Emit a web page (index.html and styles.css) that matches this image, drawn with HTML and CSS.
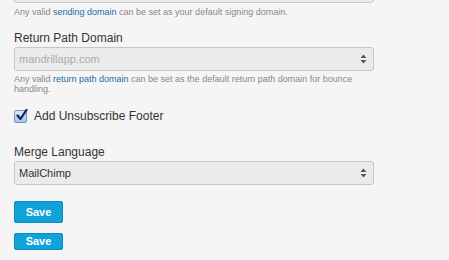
FILE: index.html
```html
<!DOCTYPE html>
<html>
<head>
<meta charset="utf-8">
<link rel="stylesheet" href="styles.css">
</head>
<body>
<div class="form">
  <div class="group first">
    <div class="select"><span class="value"></span><span class="arrows"></span></div>
    <p class="help">Any valid <a href="#">sending domain</a> can be set as your default signing domain.</p>
  </div>
  <div class="group">
    <label class="label">Return Path Domain</label>
    <div class="select"><span class="value placeholder">mandrillapp.com</span><span class="arrows"><svg width="7" height="10" viewBox="0 0 7 10"><path d="M3.5 0.5L6.5 4H0.5Z M3.5 9.5L6.5 6H0.5Z" fill="#4a5a6a"/></svg></span></div>
    <p class="help help2">Any valid <a href="#">return path domain</a> can be set as the default return path domain for bounce handling.</p>
  </div>
  <div class="check">
    <span class="box"><svg width="13" height="13" viewBox="0 0 13 13"><path d="M2.5 6.5L5.5 10L11.5 0.8" fill="none" stroke="#0d2a5a" stroke-width="2.2" stroke-linecap="round" stroke-linejoin="round"/></svg></span>
    <span class="check-label">Add Unsubscribe Footer</span>
  </div>
  <div class="group merge">
    <label class="label">Merge Language</label>
    <div class="select"><span class="value">MailChimp</span><span class="arrows"><svg width="7" height="10" viewBox="0 0 7 10"><path d="M3.5 0.5L6.5 4H0.5Z M3.5 9.5L6.5 6H0.5Z" fill="#4a5a6a"/></svg></span></div>
  </div>
  <button class="btn">Save</button>
  <button class="btn small">Save</button>
</div>
</body>
</html>
```
FILE: styles.css
```css
html, body {
  margin: 0;
  padding: 0;
  background: #f5f5f5;
  font-family: "Liberation Sans", Arial, sans-serif;
  color: #333;
  overflow: hidden;
}
.form {
  width: 360px;
  padding-left: 14px;
  display: flex;
  flex-direction: column;
  align-items: flex-start;
}
.group {
  width: 100%;
}
.first {
  margin-top: -21px;
}
.select {
  box-sizing: border-box;
  width: 360px;
  height: 24px;
  border: 1px solid #c6c6c6;
  border-radius: 3px;
  background: #ebebeb;
  display: flex;
  align-items: center;
  justify-content: space-between;
  padding: 0 6px 0 4px;
}
.value {
  font-size: 11px;
  color: #333;
}
.placeholder {
  color: #aaa;
}
.arrows {
  display: flex;
  width: 7px;
  height: 10px;
}
.help {
  margin: 4px 0 0;
  font-size: 9px;
  line-height: 10px;
  color: #888;
  width: 345px;
}
.help2 {
  margin-top: 3px;
}
.help a {
  color: #2b6aa0;
  text-decoration: none;
}
.label {
  display: block;
  font-size: 12px;
  line-height: 14px;
  color: #333;
  margin: 14px 0 2px;
}
.check {
  display: flex;
  align-items: center;
  margin-top: 15px;
  gap: 7px;
}
.box {
  box-sizing: border-box;
  width: 13px;
  height: 13px;
  border: 1px solid #7d93b8;
  border-radius: 2px;
  background: linear-gradient(#dbe8fb, #a9c5f0);
  display: flex;
  position: relative;
}
.box svg {
  position: absolute;
  left: 0;
  top: -2px;
}
.check-label {
  font-size: 12px;
  color: #333;
}
.merge .label {
  margin-top: 22px;
}
.btn {
  margin-top: 16px;
  box-sizing: border-box;
  width: 49px;
  height: 22px;
  background: #0fa3d9;
  border: 1px solid #0b8bc0;
  border-radius: 2px;
  color: #fff;
  font-family: "Liberation Sans", Arial, sans-serif;
  font-weight: bold;
  font-size: 11px;
  padding: 0;
}
.btn.small {
  margin-top: 10px;
  height: 17px;
  line-height: 13px;
}
```
